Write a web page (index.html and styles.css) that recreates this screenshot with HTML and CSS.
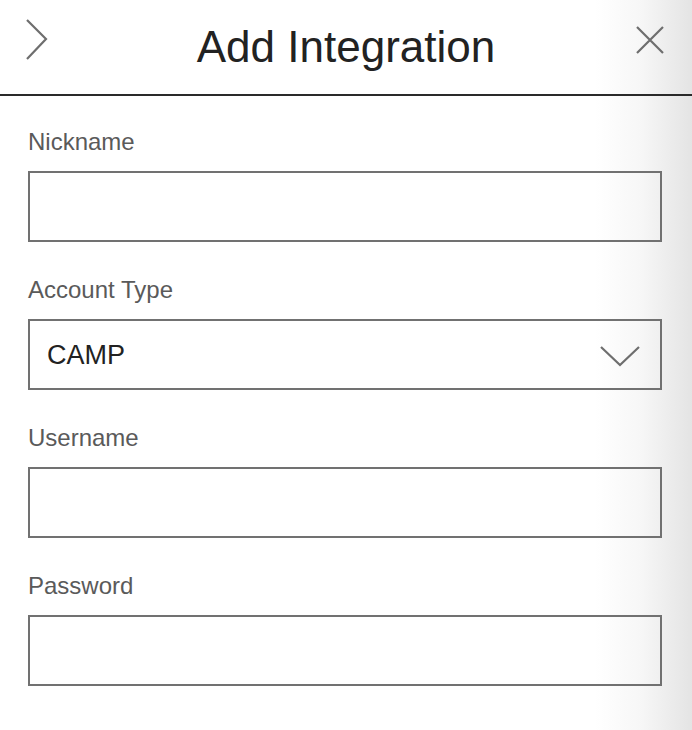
FILE: index.html
```html
<!DOCTYPE html>
<html lang="en">
<head>
<meta charset="utf-8">
<title>Add Integration</title>
<link rel="stylesheet" href="styles.css">
</head>
<body>
<div class="panel">
  <header class="header">
    <button class="icon-btn back" aria-label="Back">
      <svg width="24" height="44" viewBox="0 0 24 44"><polyline points="3,2 22,21 3,41" fill="none" stroke="#6e6e6e" stroke-width="2.2"/></svg>
    </button>
    <h1 class="title">Add Integration</h1>
    <button class="icon-btn close" aria-label="Close">
      <svg width="32" height="32" viewBox="0 0 32 32"><path d="M3 3 L29 29 M29 3 L3 29" fill="none" stroke="#6e6e6e" stroke-width="2.2"/></svg>
    </button>
  </header>
  <form class="form">
    <div class="field">
      <label class="label" for="nick">Nickname</label>
      <input class="input" id="nick" type="text">
    </div>
    <div class="field">
      <label class="label">Account Type</label>
      <div class="input select">
        <span class="select-value">CAMP</span>
        <svg class="caret" width="40" height="22" viewBox="0 0 40 22"><polyline points="1,2 20,20 39,2" fill="none" stroke="#6e6e6e" stroke-width="2.2"/></svg>
      </div>
    </div>
    <div class="field">
      <label class="label" for="user">Username</label>
      <input class="input" id="user" type="text">
    </div>
    <div class="field">
      <label class="label" for="pass">Password</label>
      <input class="input" id="pass" type="password">
    </div>
  </form>
</div>
</body>
</html>
```

FILE: styles.css
```css
html, body {
  margin: 0;
  padding: 0;
  height: 100%;
}
body {
  font-family: "Liberation Sans", Arial, sans-serif;
  background: linear-gradient(90deg, #ffffff 0, #ffffff 595px, #f7f7f7 640px, #e4e4e4 692px);
  color: #222;
}
.panel {
  width: 692px;
  height: 730px;
}
.header {
  display: grid;
  grid-template-columns: 80px 1fr 80px;
  height: 94px;
  border-bottom: 2px solid #2a2a2a;
  box-sizing: content-box;
}
.icon-btn {
  background: none;
  border: 0;
  padding: 0;
  margin: 0;
  cursor: pointer;
  display: block;
}
.back {
  justify-self: start;
  margin: 18px 0 0 24px;
  height: 44px;
}
.close {
  justify-self: end;
  margin: 24px 26px 0 0;
  height: 32px;
}
.icon-btn svg { display: block; }
.title {
  margin: 22px 0 0;
  font-size: 44px;
  line-height: 50px;
  font-weight: 400;
  text-align: center;
  color: #222;
}
.form {
  display: flex;
  flex-direction: column;
  gap: 35px;
  padding: 33px 30px 0 28px;
}
.field {
  display: flex;
  flex-direction: column;
  gap: 16px;
}
.label {
  font-size: 24px;
  line-height: 26px;
  color: #5a5a5a;
}
.input {
  box-sizing: border-box;
  height: 71px;
  width: 100%;
  margin: 0;
  border: 2px solid #717171;
  border-radius: 0;
  background: transparent;
  font-family: inherit;
  font-size: 27px;
  color: #222;
  padding: 0 17px;
  outline: none;
}
.select {
  display: flex;
  align-items: center;
  justify-content: space-between;
  padding: 0 20px 0 17px;
}
.select-value {
  font-size: 27px;
  color: #222;
  margin-top: 2px;
}
.caret {
  display: block;
  margin-top: 3px;
}
```
